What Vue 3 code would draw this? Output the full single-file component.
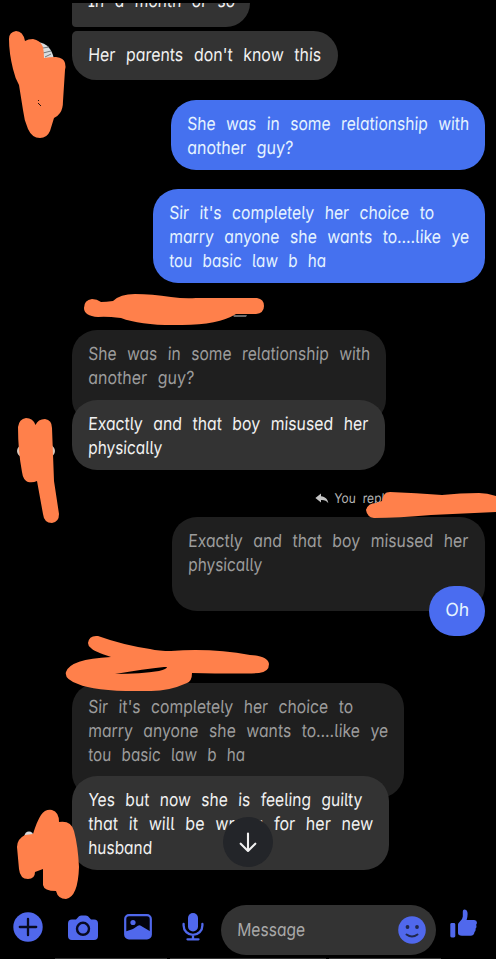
<script setup>
const vFit = {
  mounted(el, { value }) {
    const apply = () => {
      el.style.transform = 'none'
      const natural = el.getBoundingClientRect().width
      el.style.transform = `scaleX(${value / natural}) skewX(-3deg)`
    }
    apply()
    document.fonts?.ready.then(apply)
  },
}

const relation = [['She was in some relationship with', 282], ['another guy?', 106]]
const choice = [["Sir it's completely her choice to", 265], ['marry anyone she wants to....like ye', 300], ['tou basic law b ha', 157]]
const exactly = [['Exactly and that boy misused her', 280], ['physically', 74]]

const messages = [
  { id: 'month', kind: 'in', lines: [['In a month or so', 147]] },
  { id: 'parents', kind: 'in', lines: [["Her parents don't know this", 233]] },
  { id: 'relation', kind: 'out', lines: relation },
  { id: 'choice', kind: 'out', lines: choice },
  { id: 'quote-relation', kind: 'quote', lines: relation },
  { id: 'exactly', kind: 'in', lines: exactly },
  { id: 'reply', kind: 'label' },
  { id: 'quote-exactly', kind: 'quote mine', lines: exactly },
  { id: 'oh', kind: 'out', lines: [['Oh', 24]] },
  { id: 'quote-choice', kind: 'quote', lines: choice },
  { id: 'guilty', kind: 'in', lines: [['Yes but now she is feeling guilty', 274], ['that it will be wrong for her new', 285], ['husband', 64]] },
]
</script>

<template>
  <main class="screen">
    <section class="thread">
      <template v-for="m in messages" :key="m.id">
        <div v-if="m.kind === 'label'" class="reply">
          <svg width="14" height="11" viewBox="0 0 14 11"><path d="M6 .5.4 5 6 9.5V7c3.500-.2 5.500.8 7.300 3.300C13 6.500 10.500 3.500 6 3.200Z" fill="#c4c4c4" /></svg>
          <span class="who"><span v-fit="68" class="line">You replied</span></span>
        </div>
        <div v-else class="bubble" :class="[m.kind, m.id]">
          <div v-for="[text, w] in m.lines" :key="text" class="row"><span v-fit="w" class="line">{{ text }}</span></div>
        </div>
      </template>
    </section>

    <footer class="composer">
      <svg class="plus" width="30" height="30" viewBox="0 0 30 30"><circle cx="15" cy="15" r="14.700" fill="#5068ec" /><path d="M15 6.800v16.400M6.800 15h16.400" stroke="#080a20" stroke-width="2.300" stroke-linecap="round" /></svg>
      <svg class="camera" width="30" height="26" viewBox="0 0 30 26"><path d="M4 4.500h4L11 1.200Q12 .4 13.500.4h4Q19 .4 20 1.200l3 3.300h3q4 0 4 4V21q0 4-4 4H4q-4 0-4-4V8.500q0-4 4-4Z" fill="#5068ec" /><circle cx="15" cy="13.800" r="6" fill="#5068ec" stroke="#080a20" stroke-width="2.400" /></svg>
      <svg class="photo" width="28" height="26" viewBox="0 0 28 26"><rect x="1.200" y="1.200" width="25.600" height="23.200" rx="3.800" fill="#02030c" stroke="#5068ec" stroke-width="2.200" /><circle cx="9" cy="8.500" r="2.600" fill="#5068ec" /><path d="M1.500 17.500 7.500 15.500Q9 15 10.200 14.200L13.800 11.800Q15.500 10.800 17.200 11.900L26.500 17.500V21q0 3.500-3 3.500H4.500Q1.500 24.500 1.500 21Z" fill="#5068ec" /></svg>
      <svg class="mic" width="22" height="28" viewBox="0 0 22 28"><rect x="6" y="0" width="10" height="18.500" rx="5" fill="#5068ec" /><path d="M1.600 11v1.500a9.400 9.400 0 0 0 18.800 0V11M11 22v4M5.500 26.300h11" fill="none" stroke="#5068ec" stroke-width="2.300" stroke-linecap="round" /></svg>
      <div class="field">
        <span class="hint"><span v-fit="68" class="line">Message</span></span>
        <svg width="28" height="28" viewBox="0 0 28 28"><circle cx="14" cy="14" r="13.800" fill="#5068ec" /><circle cx="9.500" cy="11" r="1.900" fill="#20284e" /><circle cx="19" cy="11" r="1.900" fill="#20284e" /><path d="M8.500 18.500q5.500 4 11 0" fill="none" stroke="#20284e" stroke-width="2" stroke-linecap="round" /></svg>
      </div>
      <svg class="like" width="27" height="29" viewBox="0 0 27 29"><rect x=".3" y="14" width="5" height="14.500" rx="1.400" fill="#5068ec" /><path d="M8 15.500q0-1.500 1.500-2.500 3.200-2.500 3.300-5.500V2.500Q12.800.4 14.800.6 17.600 1 17.600 5q0 3-1 6h7.600q3 .3 2.700 3-.1 1.200-.8 1.700 1 2.500-.6 4 .5 2.300-1 3.400-.3 3.600-4 3.700H12Q8 26.800 8 24Z" fill="#5068ec" /></svg>
    </footer>

    <div class="edge"><i></i><i></i><i></i></div>

    <div class="jump">
      <svg width="18" height="21" viewBox="0 0 18 21"><path d="M9 1.500v17M1.700 11.700 9 19l7.300-7.300" fill="none" stroke="#f1f1f1" stroke-width="2.100" stroke-linecap="round" stroke-linejoin="round" /></svg>
    </div>

    <svg class="marks" width="496" height="959" viewBox="0 0 496 959">
      <path d="M38 42q13 2 16 17l-12 3Z" fill="#d8dde0" />
      <path d="M43 48l6-1M43 53l8-2M45 57l6-3" stroke="#71777b" stroke-width="1" />
      <ellipse cx="36" cy="451" rx="19" ry="10" fill="#d8c8bd" />
      <circle cx="29" cy="836" r="4.500" fill="#d8dadd" />
      <path d="M233 315h14l-1 2h-12Z" fill="#696969" />
      <g fill="#ff804b">
        <path d="M9 39q0-7 7-8 7 0 9 10 3-2 8-2 7 1 10 8 1 5 1 11 5-1 12-1 8 1 9 6 1 4 0 7l-2 31q0 8-3 12-2 3-6 5l-4 13q-3 7-10 7-8 0-12-9-4-9-5-19l-4-25q-4-7-6-16Q9 53 9 39Z" />
        <path d="M18 427q1-8 8-9 7 0 9.500 7 2.500-6 9.500-6 7 1 7 9l2 53 5 33q0 8-7 9-8 0-9-9l-6-33q-4 2-9 1-5-2-6-10-4-21-4-45Z" />
        <path d="M84 308q0-8 8-9 5 0 9 3 5 0 12-1 7-7 22-7 17 0 36 3 14 2 25 1h61q7 1 7 8t-8 8h-20q-18 11-54 11-40 1-61-7-16-2-23-1-14-1-14-9Z" />
        <path d="M366 510q2-7 10-7l6-2q1-9 8-9 26 1 52 3 18-2 37-2 8 0 17 3v16l-65 3q-33 3-57 3-7-1-8-8Z" />
        <path fill-rule="evenodd" d="M88 643q1-8 10-7 25 9 52 13 9 2 21 2 41-3 79 4 18 1 19 9 0 8-10 9-17 1-67 0 0 8-5 10-20 9-40 8-51 1-69-7-14-5-12-12 4-13 45-15-18-6-20-9-3-2-3-5Zm27 31q26 0 44-3 8-2 8-4l-3 0q-20 2-49 7Z" />
        <path d="M17 847q0-8 8-12l8-1q4-13 8-19 4-6 11-5 7 2 7 12 12-2 15 9 4 15 5 36-1 30-13 32-8 0-10-8-12 0-13-6v-16l-8 3q0 7-7 7-8 0-9-10Z" />
      </g>
      <path d="M38 100l1 1M38 103l3 3" stroke="#29120a" />
    </svg>
  </main>
</template>

<style>
html, body { margin: 0; background: #000; }
</style>

<style scoped>
.screen {
  position: relative;
  width: 496px;
  height: 959px;
  overflow: hidden;
  background: #000;
  border-top: 3px solid #000;
  box-sizing: border-box;
  display: flex;
  flex-direction: column;
  font-family: Inter, "Noto Sans", sans-serif;
  font-size: 18px;
  font-feature-settings: "cv11", "ss02";
  color: #f1f1f1;
}
.thread {
  height: 902px;
  display: flex;
  flex-direction: column;
  align-items: flex-start;
  overflow: hidden;
}
.bubble {
  box-sizing: border-box;
  flex: none;
  padding: 11px 16px;
  border-radius: 25px;
  margin-left: 72px;
  background: #333;
  position: relative;
}
.row { height: 24px; line-height: 25px; }
.line {
  display: inline-block;
  white-space: nowrap;
  word-spacing: 7px;
  transform-origin: 0 70%;
}
.out { align-self: flex-end; margin: 0 11px 0 0; background: #4571ef; color: #e5f4ff; }
.quote { background: #1f1f1f; color: #9c9c9c; }
.mine { align-self: flex-end; margin: 0 11px 0 0; }

.month { width: 178px; height: 48px; margin-top: -24px; border-radius: 4px 4px 24px 4px; }
.month .row { line-height: 22px; }
.parents { width: 266px; height: 49px; margin-top: 4px; border-radius: 5px 25px 25px 25px; }
.out.relation { width: 314px; height: 70px; margin-top: 20px; }
.out.choice { width: 332px; height: 94px; margin-top: 19px; }
.quote-relation { width: 314px; height: 94px; margin-top: 47px; }
.exactly { width: 313px; height: 70px; margin-top: -24px; }
.quote-exactly { width: 313px; height: 94px; margin-top: 10px; }
.out.oh { width: 56px; height: 50px; margin-top: -25px; background: #4a6cf0; }
.quote-choice { width: 332px; height: 115px; margin-top: 47px; }
.guilty { width: 317px; height: 94px; margin-top: -22px; }

.reply {
  height: 18px;
  margin: 19px 0 0 315px;
  display: flex;
  align-items: center;
  gap: 5px;
  font-size: 13.5px;
  line-height: 18px;
  color: #b4b4b4;
}
.reply .line { word-spacing: 4px; }
.who { width: 64px; }

.composer { height: 49px; display: flex; align-items: center; }
.composer > svg { flex: none; }
.plus { margin: 0 0 5px 12.500px; }
.camera { margin: 0 0 3px 25.500px; }
.photo { margin: 0 0 5px 26px; }
.mic { margin: 0 0 5px 30px; }
.field {
  box-sizing: border-box;
  width: 215px;
  height: 50px;
  margin-left: 17px;
  padding: 0 10px 0 16px;
  border-radius: 25px;
  background: #333;
  display: flex;
  align-items: center;
  justify-content: space-between;
}
.hint { width: 80px; color: #a9a9a9; font-size: 18px; }
.like { margin: 0 0 12px 14px; }
.edge { margin: 4px 0 0 55px; height: 1px; display: flex; gap: 3px; }
.edge i { width: 112px; background: #333; }
.edge i:nth-child(2) { width: 156px; }

.jump {
  position: absolute;
  left: 223px;
  top: 814px;
  width: 50px;
  height: 50px;
  border-radius: 50%;
  background: #232529;
  display: flex;
  align-items: center;
  justify-content: center;
}
.marks { position: absolute; left: 0; top: -3px; }
</style>
